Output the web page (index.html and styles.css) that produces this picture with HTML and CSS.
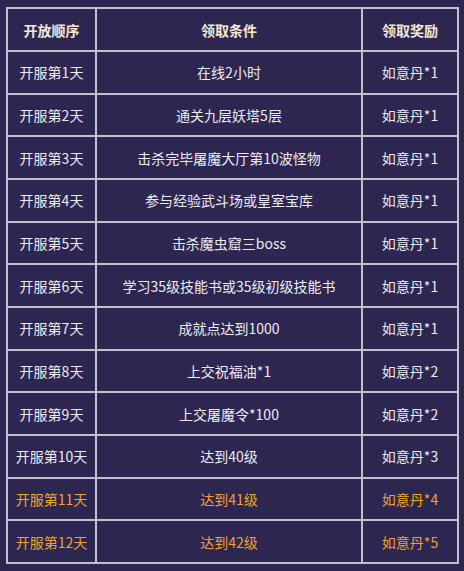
FILE: index.html
```html
<!DOCTYPE html>
<html lang="zh">
<head>
<meta charset="utf-8">
<title>开服奖励</title>
<link rel="stylesheet" href="styles.css">
</head>
<body>
<table class="rewards">
  <colgroup>
    <col class="c-order">
    <col class="c-cond">
    <col class="c-reward">
  </colgroup>
  <thead>
    <tr><th>开放顺序</th><th>领取条件</th><th>领取奖励</th></tr>
  </thead>
  <tbody>
    <tr><td>开服第1天</td><td>在线2小时</td><td>如意丹*1</td></tr>
    <tr><td>开服第2天</td><td>通关九层妖塔5层</td><td>如意丹*1</td></tr>
    <tr><td>开服第3天</td><td>击杀完毕屠魔大厅第10波怪物</td><td>如意丹*1</td></tr>
    <tr><td>开服第4天</td><td>参与经验武斗场或皇室宝库</td><td>如意丹*1</td></tr>
    <tr><td>开服第5天</td><td>击杀魔虫窟三boss</td><td>如意丹*1</td></tr>
    <tr><td>开服第6天</td><td>学习35级技能书或35级初级技能书</td><td>如意丹*1</td></tr>
    <tr><td>开服第7天</td><td>成就点达到1000</td><td>如意丹*1</td></tr>
    <tr><td>开服第8天</td><td>上交祝福油*1</td><td>如意丹*2</td></tr>
    <tr><td>开服第9天</td><td>上交屠魔令*100</td><td>如意丹*2</td></tr>
    <tr><td>开服第10天</td><td>达到40级</td><td>如意丹*3</td></tr>
    <tr class="hl"><td>开服第11天</td><td>达到41级</td><td>如意丹*4</td></tr>
    <tr class="hl"><td>开服第12天</td><td>达到42级</td><td>如意丹*5</td></tr>
  </tbody>
</table>
</body>
</html>
```
FILE: styles.css
```css
html, body {
  margin: 0;
  padding: 0;
  background: #2d2651;
}
body {
  padding: 7px 0 0 6px;
  font-family: "Microsoft YaHei", "Noto Sans CJK SC", "Noto Sans", sans-serif;
  font-size: 14px;
  color: #ecebf3;
}
.rewards {
  border-collapse: collapse;
  width: 451px;
  table-layout: fixed;
}
.c-order { width: 89px; }
.c-cond { width: 266px; }
.c-reward { width: 96px; }
.rewards th,
.rewards td {
  border: 2px solid #c3bfcf;
  text-align: center;
  vertical-align: middle;
  padding: 0;
  white-space: nowrap;
}
.rewards th {
  height: 41px;
  font-weight: bold;
  color: #f3e8d4;
}
.rewards td {
  height: 40.67px;
}
.rewards tr.hl td {
  color: #f0a424;
}
```
